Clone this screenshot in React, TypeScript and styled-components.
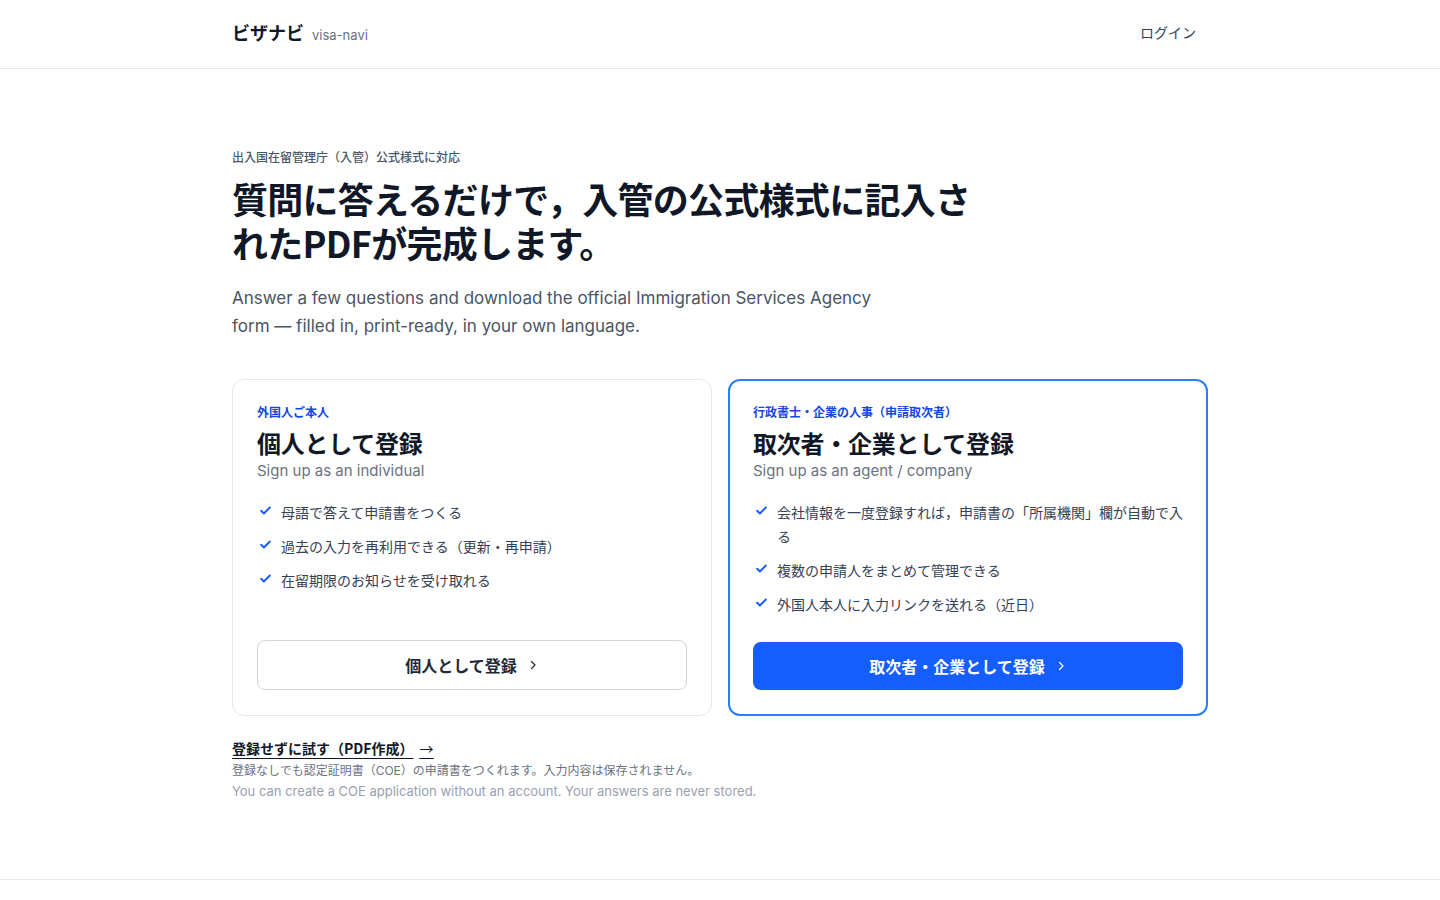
import styled, { createGlobalStyle } from "styled-components";

const GlobalStyle = createGlobalStyle`
  * { box-sizing: border-box; }
  body {
    margin: 0;
    background: #ffffff;
    color: #101828;
    font-family: "Inter", "Noto Sans CJK JP", sans-serif;
  }
`;

const Page = styled.div`
  min-height: 100vh;
  display: flex;
  flex-direction: column;
`;

const Header = styled.header`
  height: 69px;
  border-bottom: 1px solid #e5e7eb;
`;

const Inner = styled.div`
  width: 976px;
  margin: 0 auto;
`;

const HeaderRow = styled(Inner)`
  height: 68px;
  padding-bottom: 4px;
  display: flex;
  align-items: center;
  justify-content: space-between;
`;

const Brand = styled.div`
  display: flex;
  align-items: baseline;
  gap: 8px;
`;

const BrandName = styled.span`
  font-family: "Noto Sans CJK JP", sans-serif;
  font-size: 18px;
  font-weight: 700;
  color: #101828;
`;

const BrandSub = styled.span`
  font-size: 13px;
  color: #6a7282;
`;

const Login = styled.a`
  font-family: "Noto Sans CJK JP", sans-serif;
  font-size: 14px;
  color: #364153;
  padding: 6px 12px;
  cursor: pointer;
`;

const Main = styled(Inner)`
  padding-top: 80px;
  padding-bottom: 78px;
`;

const Eyebrow = styled.div`
  font-family: "Noto Sans CJK JP", sans-serif;
  font-size: 12px;
  font-weight: 500;
  color: #4a5565;
  margin-top: -1px;
  margin-bottom: 11px;
`;

const Title = styled.h1`
  margin: 0;
  max-width: 752px;
  font-family: "Noto Sans CJK JP", sans-serif;
  font-size: 36px;
  line-height: 44px;
  font-weight: 700;
  letter-spacing: -0.02em;
  color: #101828;
`;

const Lead = styled.p`
  margin: 20px 0 0;
  max-width: 660px;
  font-size: 17px;
  line-height: 28px;
  color: #4a5565;
`;

const Cards = styled.div`
  margin-top: 39px;
  display: grid;
  grid-template-columns: 1fr 1fr;
  gap: 16px;
`;

const Card = styled.div<{ $featured?: boolean }>`
  display: flex;
  flex-direction: column;
  border-radius: 12px;
  border: ${(p) => (p.$featured ? "2px solid #2b7fff" : "1px solid #e5e7eb")};
  padding: ${(p) => (p.$featured ? "22px 23px 24px" : "23px 24px 25px")};
`;

const CardEyebrow = styled.div`
  font-family: "Noto Sans CJK JP", sans-serif;
  font-size: 12px;
  font-weight: 600;
  color: #1447e6;
`;

const CardTitle = styled.h2`
  margin: 7px 0 0;
  font-family: "Noto Sans CJK JP", sans-serif;
  font-size: 24px;
  line-height: 32px;
  font-weight: 700;
  letter-spacing: -0.01em;
  color: #101828;
`;

const CardSub = styled.div`
  margin-top: 1px;
  font-size: 15px;
  line-height: 22px;
  color: #6a7282;
`;

const List = styled.ul`
  list-style: none;
  margin: 18px 0 26px;
  padding: 0;
  display: flex;
  flex-direction: column;
  gap: 10px;
`;

const Item = styled.li`
  display: flex;
  gap: 8px;
  font-family: "Noto Sans CJK JP", sans-serif;
  font-size: 14px;
  line-height: 24px;
  color: #364153;
`;

const Check = styled.span`
  flex: none;
  width: 16px;
  height: 24px;
  display: flex;
  align-items: center;
  justify-content: center;
  color: #155dfc;
  svg {
    margin-top: -4px;
  }
`;

const Button = styled.button<{ $primary?: boolean }>`
  margin-top: auto;
  height: ${(p) => (p.$primary ? "48px" : "50px")};
  width: 100%;
  border-radius: 8px;
  display: flex;
  align-items: center;
  justify-content: center;
  gap: 10px;
  font-family: "Noto Sans CJK JP", sans-serif;
  font-size: 16px;
  font-weight: 700;
  cursor: pointer;
  border: ${(p) => (p.$primary ? "none" : "1px solid #d1d5dc")};
  background: ${(p) => (p.$primary ? "#155dfc" : "#ffffff")};
  color: ${(p) => (p.$primary ? "#ffffff" : "#1e2939")};
`;

const TryBlock = styled.div`
  margin-top: 22px;
`;

const TryLink = styled.a`
  display: inline-flex;
  align-items: center;
  gap: 6px;
  font-family: "Noto Sans CJK JP", sans-serif;
  font-size: 14px;
  font-weight: 700;
  line-height: 20px;
  color: #101828;
  text-decoration: underline;
  text-underline-offset: 4px;
  cursor: pointer;
`;

const Arrow = styled.span`
  font-weight: 400;
  text-decoration: underline;
  text-underline-offset: 4px;
`;

const Note = styled.div<{ $muted?: boolean }>`
  font-family: "Inter", "Noto Sans CJK JP", sans-serif;
  font-size: ${(p) => (p.$muted ? "13px" : "12px")};
  line-height: 20px;
  color: ${(p) => (p.$muted ? "#99a1af" : "#6a7282")};
  margin-top: ${(p) => (p.$muted ? "0" : "3px")};
`;

const Footer = styled.footer`
  border-top: 1px solid #e5e7eb;
  height: 80px;
`;

const CheckIcon = () => (
  <svg width="13" height="13" viewBox="0 0 24 24" fill="none" stroke="currentColor" strokeWidth="3.6" strokeLinecap="round" strokeLinejoin="round">
    <path d="M4 12.5l5 5L20 6.5" />
  </svg>
);

const Chevron = () => (
  <svg width="12" height="12" viewBox="0 0 24 24" fill="none" stroke="currentColor" strokeWidth="2.4" strokeLinecap="round" strokeLinejoin="round">
    <path d="M9 5l7 7-7 7" />
  </svg>
);

const plans = [
  {
    eyebrow: "外国人ご本人",
    title: "個人として登録",
    sub: "Sign up as an individual",
    items: [
      "母語で答えて申請書をつくる",
      "過去の入力を再利用できる（更新・再申請）",
      "在留期限のお知らせを受け取れる",
    ],
    featured: false,
  },
  {
    eyebrow: "行政書士・企業の人事（申請取次者）",
    title: "取次者・企業として登録",
    sub: "Sign up as an agent / company",
    items: [
      "会社情報を一度登録すれば，申請書の「所属機関」欄が自動で入る",
      "複数の申請人をまとめて管理できる",
      "外国人本人に入力リンクを送れる（近日）",
    ],
    featured: true,
  },
];

export default function App() {
  return (
    <Page>
      <GlobalStyle />
      <Header>
        <HeaderRow>
          <Brand>
            <BrandName>ビザナビ</BrandName>
            <BrandSub>visa-navi</BrandSub>
          </Brand>
          <Login>ログイン</Login>
        </HeaderRow>
      </Header>

      <Main>
        <Eyebrow>出入国在留管理庁（入管）公式様式に対応</Eyebrow>
        <Title>質問に答えるだけで，入管の公式様式に記入されたPDFが完成します。</Title>
        <Lead>
          Answer a few questions and download the official Immigration Services Agency form — filled in,
          print-ready, in your own language.
        </Lead>

        <Cards>
          {plans.map((plan) => (
            <Card key={plan.title} $featured={plan.featured}>
              <CardEyebrow>{plan.eyebrow}</CardEyebrow>
              <CardTitle>{plan.title}</CardTitle>
              <CardSub>{plan.sub}</CardSub>
              <List>
                {plan.items.map((item) => (
                  <Item key={item}>
                    <Check>
                      <CheckIcon />
                    </Check>
                    <span>{item}</span>
                  </Item>
                ))}
              </List>
              <Button $primary={plan.featured}>
                {plan.title}
                <Chevron />
              </Button>
            </Card>
          ))}
        </Cards>

        <TryBlock>
          <TryLink>
            登録せずに試す（PDF作成）
            <Arrow>→</Arrow>
          </TryLink>
          <Note>登録なしでも認定証明書（COE）の申請書をつくれます。入力内容は保存されません。</Note>
          <Note $muted>You can create a COE application without an account. Your answers are never stored.</Note>
        </TryBlock>
      </Main>

      <Footer />
    </Page>
  );
}
